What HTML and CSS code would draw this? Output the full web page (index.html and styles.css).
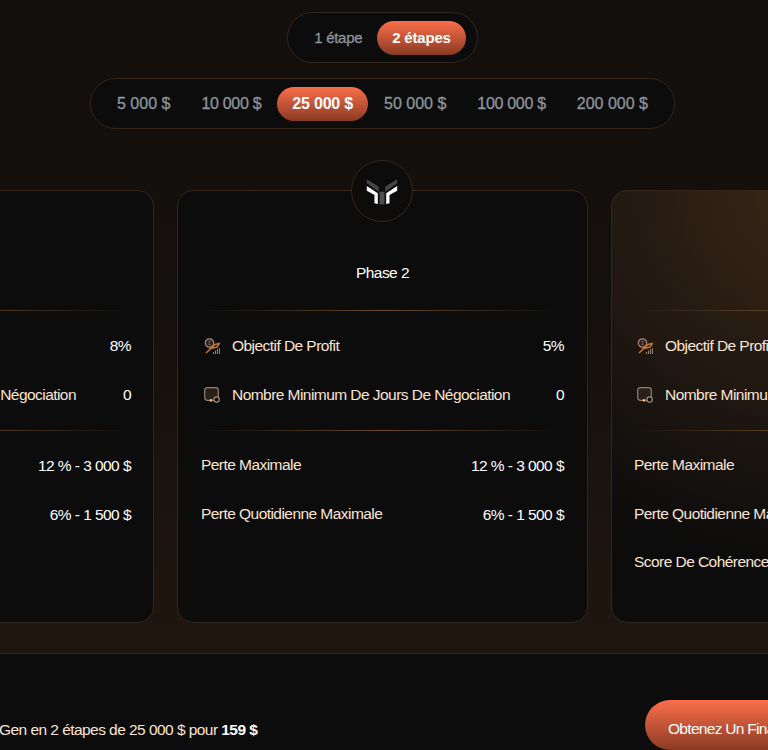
FILE: index.html
```html
<!DOCTYPE html>
<html>

<head>
    <title>Plans</title>
    <meta charset="utf-8" />
    <link rel="stylesheet" href="styles.css">
</head>

<body>

    <div class="top">
        <div class="pills">
            <span class="pill">1 étape</span>
            <span class="pill pillActive">2 étapes</span>
        </div>
        <div class="pills sizePills">
            <span class="pill">5 000 $</span>
            <span class="pill pillNarrow">10 000 $</span>
            <span class="pill pillActive">25 000 $</span>
            <span class="pill">50 000 $</span>
            <span class="pill pillNarrow">100 000 $</span>
            <span class="pill">200 000 $</span>
        </div>

        <div class="cards">
            <div class="card cardLeft">
                <div class="cardTitle">Phase 1</div>
                <div class="line"></div>
                <div class="rows rowsIcon">
                    <div class="row">
                        <span class="label"><svg class="icon" viewBox="0 0 16 16"><circle cx="5.5" cy="5" r="4.2" fill="#2a1f18" stroke="#a58c78" stroke-width="1.2"/><path d="M4.6 3.4h2M4.6 5h1.8M4.6 6.6h2" stroke="#a58c78" stroke-width=".7"/><path d="M2 15L11 6.5L15.5 5.5L13 9L5 11" fill="none" stroke="#c4742f" stroke-width="1.5"/><path d="M9.5 16v-2M11.5 16v-3.5M13.5 16v-5M15.5 16v-6" stroke="#8c8075" stroke-width="1.1"/></svg>Objectif De Profit</span>
                        <span class="value">8%</span>
                    </div>
                    <div class="row">
                        <span class="label"><svg class="icon" viewBox="0 0 16 16"><rect x=".7" y=".7" width="13.6" height="12.6" rx="2.6" fill="#2a2019" stroke="#93806f" stroke-width="1.2"/><circle cx="12.6" cy="12.6" r="2.7" fill="#0c0c0c" stroke="#a08a78" stroke-width="1.2"/><circle cx="7" cy="13.4" r="1.3" fill="#f0b27c"/></svg>Nombre Minimum De Jours De Négociation</span>
                        <span class="value">0</span>
                    </div>
                </div>
                <div class="line"></div>
                <div class="rows">
                    <div class="row"><span class="label">Perte Maximale</span><span class="value">12 % - 3 000 $</span></div>
                    <div class="row"><span class="label">Perte Quotidienne Maximale</span><span class="value">6% - 1 500 $</span></div>
                </div>
            </div>

            <div class="card">
                <div class="logo">
                    <svg viewBox="0 0 32 27" width="32" height="27">
                        <path d="M.8 1.3L12.8 8.7V13.7L.8 5.3Z M31.2 1.3L19.2 8.7V13.7L31.2 5.3Z" fill="#454545"/>
                        <path d="M13.5 13.7H18.5V26.3H13.5Z" fill="#4d4d4d"/>
                        <path d="M.8 8L11.8 15.3V26L8.5 25.3V17L.8 12.7Z M31.2 8L20.2 15.3V26L23.5 25.3V17L31.2 12.7Z" fill="#fff"/>
                    </svg>
                </div>
                <div class="cardTitle">Phase 2</div>
                <div class="line"></div>
                <div class="rows rowsIcon">
                    <div class="row">
                        <span class="label"><svg class="icon" viewBox="0 0 16 16"><circle cx="5.5" cy="5" r="4.2" fill="#2a1f18" stroke="#a58c78" stroke-width="1.2"/><path d="M4.6 3.4h2M4.6 5h1.8M4.6 6.6h2" stroke="#a58c78" stroke-width=".7"/><path d="M2 15L11 6.5L15.5 5.5L13 9L5 11" fill="none" stroke="#c4742f" stroke-width="1.5"/><path d="M9.5 16v-2M11.5 16v-3.5M13.5 16v-5M15.5 16v-6" stroke="#8c8075" stroke-width="1.1"/></svg>Objectif De Profit</span>
                        <span class="value">5%</span>
                    </div>
                    <div class="row">
                        <span class="label"><svg class="icon" viewBox="0 0 16 16"><rect x=".7" y=".7" width="13.6" height="12.6" rx="2.6" fill="#2a2019" stroke="#93806f" stroke-width="1.2"/><circle cx="12.6" cy="12.6" r="2.7" fill="#0c0c0c" stroke="#a08a78" stroke-width="1.2"/><circle cx="7" cy="13.4" r="1.3" fill="#f0b27c"/></svg>Nombre Minimum De Jours De Négociation</span>
                        <span class="value">0</span>
                    </div>
                </div>
                <div class="line"></div>
                <div class="rows">
                    <div class="row"><span class="label">Perte Maximale</span><span class="value">12 % - 3 000 $</span></div>
                    <div class="row"><span class="label">Perte Quotidienne Maximale</span><span class="value">6% - 1 500 $</span></div>
                </div>
            </div>

            <div class="card cardGlow">
                <div class="cardTitle">&nbsp;</div>
                <div class="line"></div>
                <div class="rows rowsIcon">
                    <div class="row">
                        <span class="label"><svg class="icon" viewBox="0 0 16 16"><circle cx="5.5" cy="5" r="4.2" fill="#2a1f18" stroke="#a58c78" stroke-width="1.2"/><path d="M4.6 3.4h2M4.6 5h1.8M4.6 6.6h2" stroke="#a58c78" stroke-width=".7"/><path d="M2 15L11 6.5L15.5 5.5L13 9L5 11" fill="none" stroke="#c4742f" stroke-width="1.5"/><path d="M9.5 16v-2M11.5 16v-3.5M13.5 16v-5M15.5 16v-6" stroke="#8c8075" stroke-width="1.1"/></svg>Objectif De Profit</span>
                    </div>
                    <div class="row">
                        <span class="label"><svg class="icon" viewBox="0 0 16 16"><rect x=".7" y=".7" width="13.6" height="12.6" rx="2.6" fill="#2a2019" stroke="#93806f" stroke-width="1.2"/><circle cx="12.6" cy="12.6" r="2.7" fill="#0c0c0c" stroke="#a08a78" stroke-width="1.2"/><circle cx="7" cy="13.4" r="1.3" fill="#f0b27c"/></svg>Nombre Minimum De Jours De Négociation</span>
                    </div>
                </div>
                <div class="line"></div>
                <div class="rows">
                    <div class="row"><span class="label">Perte Maximale</span></div>
                    <div class="row"><span class="label">Perte Quotidienne Maximale</span></div>
                    <div class="row"><span class="label">Score De Cohérence</span></div>
                </div>
            </div>
        </div>
    </div>

    <div class="bottom">
        <div class="summary">Gen en 2 étapes de 25 000 $ pour <b>159 $</b></div>
        <div class="cta">Obtenez Un Financement</div>
    </div>

</body>

</html>
```

FILE: styles.css
```css
html,
body {
    margin: 0;
    height: 750px;
    overflow: hidden;
    background-color: #0c0c0c;
    font-family: "Liberation Sans", Arial, sans-serif;
    color: #fff;
}

.top {
    height: 654px;
    border-bottom: 1px solid #33261c;
    padding: 12px 3px 0 0;
    box-sizing: border-box;
    display: flex;
    flex-direction: column;
    align-items: center;
    overflow: hidden;
    background: linear-gradient(180deg, #120f0d 0%, #15100d 50%, #20160f 100%);
}

.pills {
    display: flex;
    align-items: center;
    justify-content: space-between;
    box-sizing: border-box;
    height: 51px;
    padding: 0 11px;
    background-color: #0c0c0c;
    border: 1px solid #33261c;
    border-radius: 26px;
}

.sizePills {
    width: 585px;
    margin-top: 15px;
}

.pill {
    padding: 0 15px;
    font-size: 15px;
    letter-spacing: -0.3px;
    -webkit-text-stroke: 0.3px;
    color: #8d959c;
    white-space: nowrap;
}

.sizePills .pill {
    font-size: 16px;
    letter-spacing: 0;
}

.sizePills .pillNarrow {
    letter-spacing: -0.3px;
}

.pill.pillActive {
    font-weight: bold;
    letter-spacing: -0.2px;
    -webkit-text-stroke: 0;
    color: #fff;
    height: 34px;
    line-height: 34px;
    border-radius: 17px;
    background: linear-gradient(180deg, #fb6f4a 0%, #8a3a24 100%);
}

.cards {
    display: flex;
    justify-content: center;
    gap: 23px;
    margin-top: 61px;
    width: 100%;
}

.card {
    position: relative;
    flex-shrink: 0;
    box-sizing: border-box;
    width: 411px;
    height: 433px;
    padding: 0 23px;
    background-color: #0c0c0c;
    border: 1px solid #33261c;
    border-radius: 16px;
}

.cardLeft {
    padding-right: 22px;
}

.cardGlow {
    padding-left: 22px;
    background: radial-gradient(400px 380px at 50% 0, #3a2717 0%, #0c0c0c 100%);
}

.logo {
    position: absolute;
    top: -31px;
    left: 173px;
    width: 62px;
    height: 62px;
    box-sizing: border-box;
    border: 1px solid #33261c;
    border-radius: 50%;
    background-color: #0c0c0c;
    display: flex;
    align-items: center;
    justify-content: center;
}

.cardTitle {
    text-align: center;
    font-size: 15.5px;
    letter-spacing: -0.55px;
    height: 119px;
    line-height: 163px;
    box-sizing: border-box;
}

.line {
    height: 1px;
    background: linear-gradient(90deg, transparent 0%, #6b4a2f 50%, transparent 100%);
}

.rows {
    padding-top: 11px;
    height: 119px;
    box-sizing: border-box;
}

.row {
    display: flex;
    justify-content: space-between;
    align-items: center;
    height: 48.5px;
    font-size: 15.5px;
    letter-spacing: -0.55px;
}

.label {
    display: flex;
    align-items: center;
    padding-bottom: 2px;
    color: #fae4d3;
    white-space: nowrap;
}

.rowsIcon .label {
    padding-bottom: 0;
}

.value {
    color: #fff;
}

.icon {
    flex-shrink: 0;
    width: 16px;
    height: 16px;
    margin-left: 3px;
    margin-right: 12px;
}

.bottom {
    display: flex;
    justify-content: space-between;
    align-items: center;
    height: 96px;
    padding-top: 46px;
    box-sizing: border-box;
    overflow: hidden;
}

.summary {
    margin-left: -1px;
    padding-top: 10px;
    font-size: 15.5px;
    letter-spacing: -0.55px;
    color: #fae4d3;
    white-space: nowrap;
}

.summary b {
    color: #fff;
}

.cta {
    flex-shrink: 0;
    margin-right: -100px;
    height: 50px;
    line-height: 58px;
    width: 223px;
    padding-left: 23px;
    box-sizing: border-box;
    border-radius: 25px 0 0 25px;
    font-size: 15.5px;
    letter-spacing: -0.7px;
    color: #fff;
    background: linear-gradient(180deg, #fb6f4a 0%, #8a3a24 100%);
    white-space: nowrap;
}
```
